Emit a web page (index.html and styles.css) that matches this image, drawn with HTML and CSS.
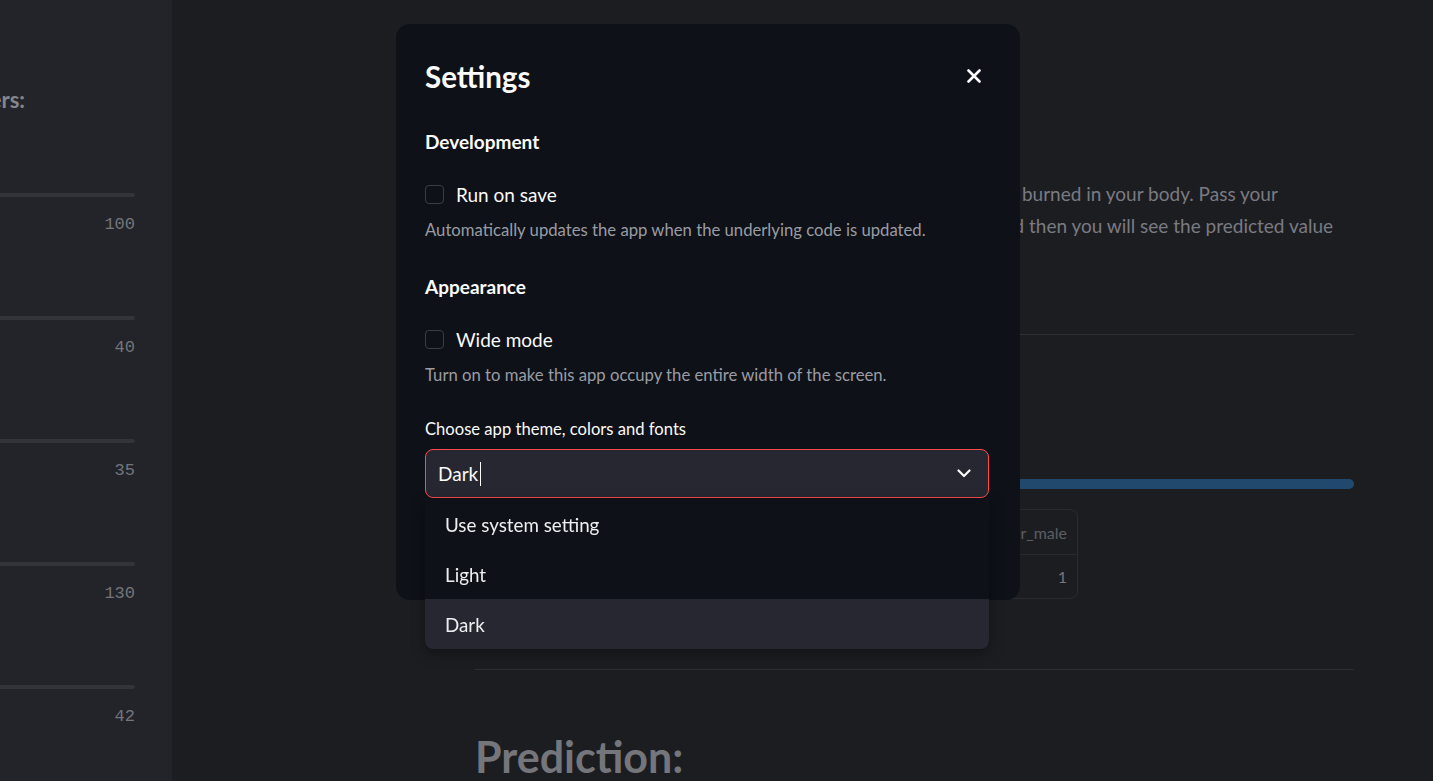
FILE: index.html
```html
<!DOCTYPE html>
<html lang="en">
<head>
<meta charset="utf-8">
<title>Settings</title>
<link rel="stylesheet" href="styles.css">
</head>
<body>
<div class="app">
  <aside class="sidebar">
    <div class="sb-inner">
      <div class="sb-head"><span>User Input Parameters:</span></div>
      <div class="slider"><div class="track"></div><div class="val">100</div></div>
      <div class="slider"><div class="track"></div><div class="val">40</div></div>
      <div class="slider"><div class="track"></div><div class="val">35</div></div>
      <div class="slider"><div class="track"></div><div class="val">130</div></div>
      <div class="slider"><div class="track"></div><div class="val">42</div></div>
    </div>
  </aside>
  <main class="main">
    <div class="block">
      <p class="intro">In this webapp you will be able to observe your predicted calories burned in your body. Pass your<br>parameters such as Ages, Gender, BMI, etc., into this WebApp and then you will see the predicted value</p>
      <hr class="rule rule-top">
      <div class="bar"></div>
      <table class="df">
        <thead>
          <tr><th></th><th>Age</th><th>BMI</th><th>Duration</th><th>Heart_Rate</th><th>Body_Temp</th><th>Gender_male</th></tr>
        </thead>
        <tbody>
          <tr><td>0</td><td>40</td><td>20</td><td>15</td><td>80</td><td>38</td><td>1</td></tr>
        </tbody>
      </table>
      <hr class="rule rule-bottom">
      <h2 class="pred">Prediction:</h2>
    </div>
  </main>
</div>

<div class="modal" role="dialog">
  <div class="modal-head">
    <h1 class="modal-title">Settings</h1>
    <button class="close" aria-label="Close">
      <svg width="14" height="14" viewBox="0 0 14 14"><path d="M1.5 1.5 L12.5 12.5 M12.5 1.5 L1.5 12.5" stroke="#fafafa" stroke-width="2.6" stroke-linecap="round"/></svg>
    </button>
  </div>

  <h3 class="sec-title sec-dev">Development</h3>
  <label class="check"><span class="box"></span><span>Run on save</span></label>
  <p class="help">Automatically updates the app when the underlying code is updated.</p>

  <h3 class="sec-title sec-app">Appearance</h3>
  <label class="check"><span class="box"></span><span>Wide mode</span></label>
  <p class="help">Turn on to make this app occupy the entire width of the screen.</p>

  <div class="field-label">Choose app theme, colors and fonts</div>
  <div class="select-wrap">
    <div class="select">
      <span class="sel-value">Dark<span class="caret"></span></span>
      <svg class="chev" width="14" height="9" viewBox="0 0 14 9"><path d="M1.5 1.5 L7 7 L12.5 1.5" fill="none" stroke="#fafafa" stroke-width="2.2" stroke-linecap="round" stroke-linejoin="round"/></svg>
    </div>
    <ul class="menu">
      <li class="opt">Use system setting</li>
      <li class="opt">Light</li>
      <li class="opt opt-active">Dark</li>
    </ul>
  </div>
</div>
</body>
</html>
```

FILE: styles.css
```css
* { box-sizing: border-box; }

html, body {
  margin: 0;
  padding: 0;
  height: 100%;
}

body {
  background: #1c1d21;
  font-family: "Lato", "Noto Sans", sans-serif;
  overflow: hidden;
}

.app {
  display: flex;
  height: 781px;
}

/* Sidebar */
.sidebar {
  width: 172px;
  flex: none;
  background: #232429;
  overflow: hidden;
}

.sb-inner {
  width: 300px;
  margin-left: -165px;
  padding-top: 85px;
}

.sb-head {
  display: flex;
  justify-content: flex-end;
  margin-right: 110px;
  white-space: nowrap;
  font-size: 22px;
  font-weight: 700;
  line-height: 30px;
  color: #85868c;
  margin-bottom: 78px;
}

.slider {
  height: 123px;
}

.track {
  height: 4px;
  border-radius: 2px;
  background: #33343a;
}

.val {
  margin-top: 18px;
  text-align: right;
  font-family: "Liberation Mono", "DejaVu Sans Mono", monospace;
  font-size: 17px;
  line-height: 20px;
  color: #74757b;
}

/* Main */
.main {
  flex: 1;
  overflow: hidden;
}

.block {
  padding: 178px 79px 0 303px;
}

.intro {
  margin: 0;
  font-size: 19px;
  line-height: 32px;
  color: #7a7b81;
  white-space: nowrap;
}

.rule {
  border: 0;
  height: 1px;
  background: #2e2f35;
  margin: 0;
}

.rule-top { margin-top: 92px; }

.bar {
  margin-top: 144px;
  height: 10px;
  border-radius: 5px;
  background: #21496d;
}

.df {
  margin-top: 20px;
  width: 603px;
  border-collapse: separate;
  border-spacing: 0;
  border: 1px solid #2a2b30;
  border-radius: 8px;
  font-size: 16px;
  color: #76777c;
}

.df th {
  height: 45px;
  font-weight: 400;
  color: #5d5e64;
  text-align: right;
  padding: 0 10px;
  border-bottom: 1px solid #2a2b30;
}

.df td {
  height: 43px;
  text-align: right;
  padding: 0 10px;
}

.rule-bottom { margin-top: 70px; }

.pred {
  margin: 64px 0 0;
  font-size: 43px;
  line-height: 46px;
  font-weight: 700;
  color: #75767b;
}

/* Modal */
.modal {
  position: fixed;
  left: 396px;
  top: 24px;
  width: 624px;
  height: 576px;
  background: #0e1117;
  border-radius: 14px;
  padding: 33px 31px 0 29px;
  color: #fafafa;
}

.modal-head {
  display: flex;
  align-items: center;
  justify-content: space-between;
  height: 40px;
}

.modal-title {
  margin: 0;
  font-size: 29.5px;
  font-weight: 700;
  line-height: 40px;
}

.close {
  background: none;
  border: 0;
  padding: 0;
  margin-right: 8px;
  margin-top: -2px;
  width: 14px;
  height: 14px;
  display: flex;
}

.sec-title {
  margin: 0;
  font-size: 19px;
  font-weight: 700;
  line-height: 26px;
}

.sec-dev { margin-top: 32px; }
.sec-app { margin-top: 33px; }

.check {
  display: flex;
  align-items: center;
  gap: 12px;
  margin-top: 26px;
  height: 26px;
  font-size: 19px;
}

.box {
  width: 19px;
  height: 19px;
  border: 1px solid #3b3d45;
  border-radius: 4px;
}

.help {
  margin: 12px 0 0;
  font-size: 16.7px;
  line-height: 22px;
  color: #9a9ca3;
}

.field-label {
  margin-top: 32px;
  font-size: 16.6px;
  line-height: 22px;
}

.select-wrap {
  position: relative;
  margin-top: 9px;
}

.select {
  height: 49px;
  display: flex;
  align-items: center;
  justify-content: space-between;
  padding: 0 17px 0 12px;
  background: #262730;
  border: 1px solid #ff4b4b;
  border-radius: 8px;
}

.sel-value {
  display: flex;
  align-items: center;
  font-size: 19px;
}

.caret {
  width: 1px;
  height: 24px;
  background: #fafafa;
  margin-left: 2px;
}

.menu {
  position: absolute;
  top: 50px;
  left: 0;
  right: 0;
  margin: 0;
  padding: 0;
  list-style: none;
  background: #0e1117;
  border-radius: 0 0 8px 8px;
  box-shadow: 0 4px 14px rgba(0, 0, 0, 0.35);
  overflow: hidden;
  z-index: 2;
}

.opt {
  height: 50px;
  display: flex;
  align-items: center;
  padding-left: 20px;
  font-size: 18.8px;
  color: #eeeef0;
}

.opt-active {
  background: #262730;
}
```
